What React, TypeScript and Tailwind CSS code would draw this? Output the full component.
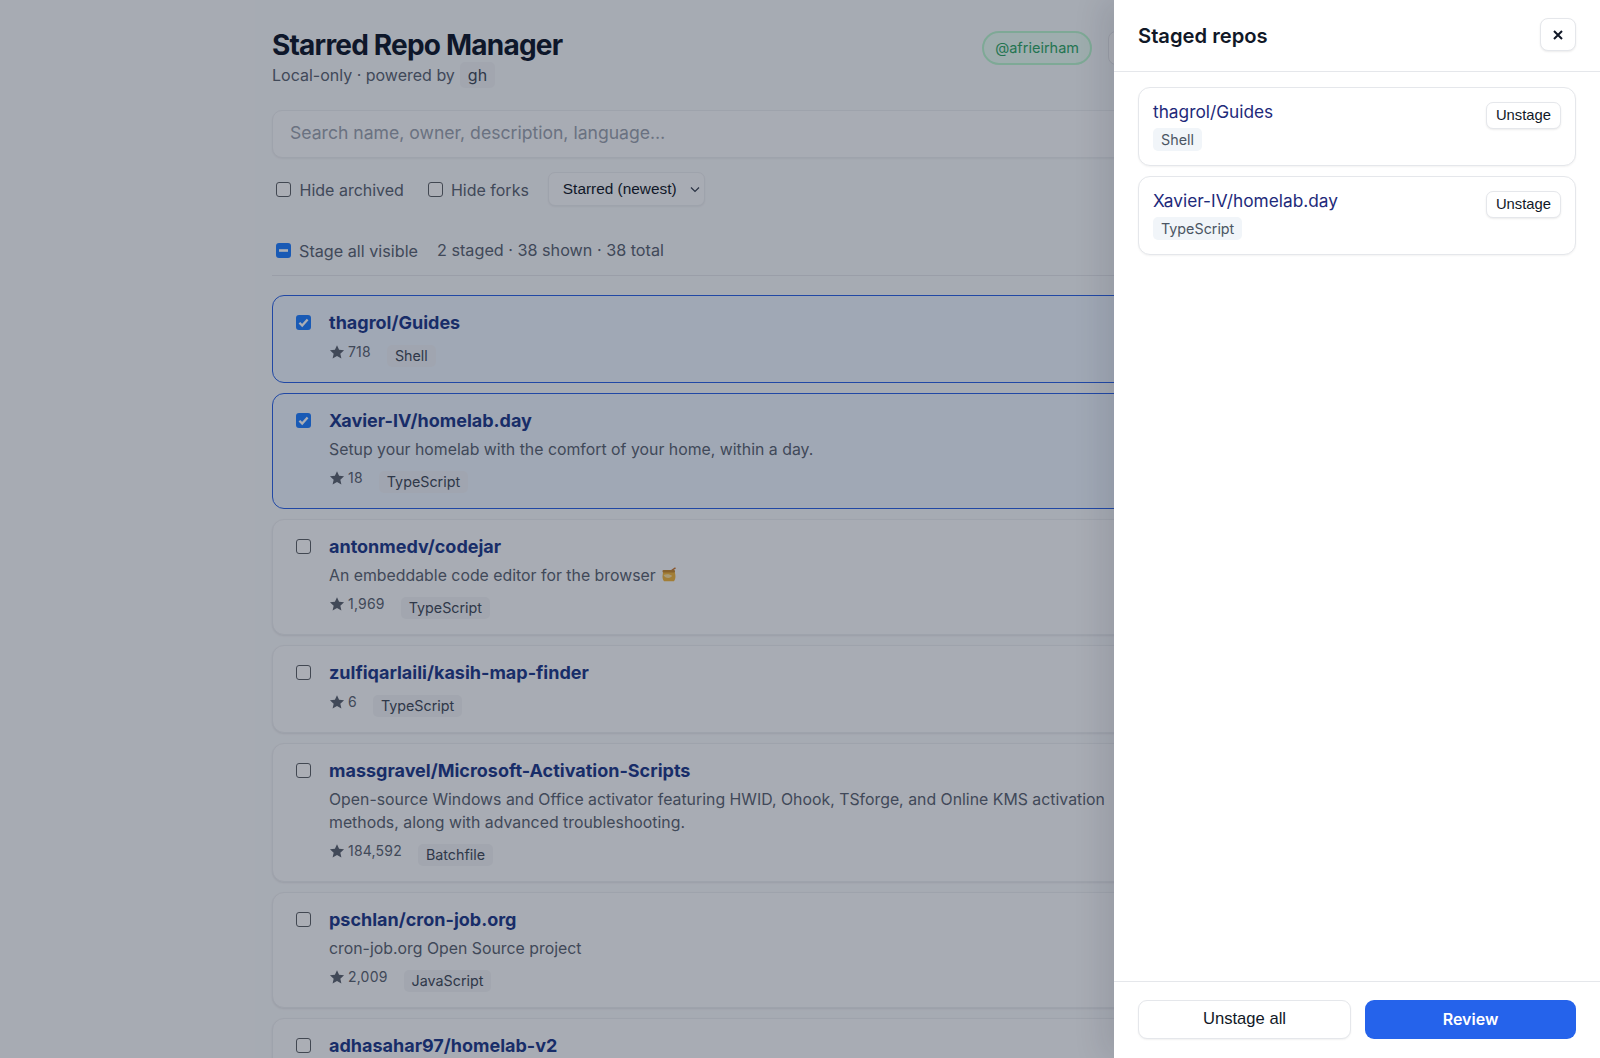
import React from "react";

function Check({ state }: { state: "on" | "off" | "mixed" }) {
  if (state === "off")
    return <span className="block w-[15px] h-[15px] shrink-0 rounded-[3px] border border-[#5f6368] bg-white" />;
  return (
    <span className="flex w-[15px] h-[15px] shrink-0 items-center justify-center rounded-[3px] bg-[#207eff]">
      <svg viewBox="0 0 15 15" className="w-[15px] h-[15px]">
        {state === "on" ? (
          <path d="M3.400 7.800l2.800 2.800 5.400-6" fill="none" stroke="white" strokeWidth="2.300" />
        ) : (
          <rect x="3" y="6.200" width="9" height="2.600" fill="white" />
        )}
      </svg>
    </span>
  );
}

function Star({ shift }: { shift: boolean }) {
  return (
    <svg viewBox="0 0 24 24" className="w-[16px] h-[16px] mr-[3px] shrink-0 fill-[#5d6470]">
      <path d="M12 1.800l3.100 6.900 7.500.8-5.600 5 1.600 7.400L12 18.100l-6.600 3.800L7 14.500l-5.600-5 7.500-.8z" />
    </svg>
  );
}

function Honey() {
  return (
    <svg viewBox="0 0 16 16" className="inline-block w-[16px] h-[16px] ml-[5px] align-[-2px]">
      <path d="M10.500 3.500L14.500 .8" stroke="#c9772c" strokeWidth="1.400" />
      <path d="M2.200 4h11.400l.6 3c.6 3 .2 5.500-1.200 7.200H3C1.500 12.500 1.200 10 1.800 7z" fill="#f2b63c" />
      <rect x="1.500" y="3" width="12.500" height="2.600" rx="1" fill="#c98a2e" />
      <path d="M2.500 8c3.500-1.500 7-.5 8.500.8-1 3-7 3-8.500-.8z" fill="#fbe0a0" />
    </svg>
  );
}

type Repo = { name: string; desc?: string[]; stars: string; lang: string; honey?: boolean; staged?: boolean };

const repos: Repo[] = [
  { name: "thagrol/Guides", stars: "718", lang: "Shell", staged: true },
  { name: "Xavier-IV/homelab.day", desc: ["Setup your homelab with the comfort of your home, within a day."], stars: "18", lang: "TypeScript", staged: true },
  { name: "antonmedv/codejar", desc: ["An embeddable code editor for the browser"], honey: true, stars: "1,969", lang: "TypeScript" },
  { name: "zulfiqarlaili/kasih-map-finder", stars: "6", lang: "TypeScript" },
  {
    name: "massgravel/Microsoft-Activation-Scripts",
    desc: [
      "Open-source Windows and Office activator featuring HWID, Ohook, TSforge, and Online KMS activation",
      "methods, along with advanced troubleshooting.",
    ],
    stars: "184,592",
    lang: "Batchfile",
  },
  { name: "pschlan/cron-job.org", desc: ["cron-job.org Open Source project"], stars: "2,009", lang: "JavaScript" },
  { name: "adhasahar97/homelab-v2", desc: ["Personal homelab configuration"], stars: "3", lang: "Shell" },
];

function RepoCard({ r }: { r: Repo }) {
  const hasDesc = !!r.desc;
  return (
    <div
      className={
        "flex rounded-[12px] border pt-[14px] pl-[23px] pr-[23px] " +
        (hasDesc ? "pb-[15px] " : "pb-[14.500px] ") +
        (r.staged
          ? "border-[#2b63e6] bg-[#eff6ff]"
          : "border-[#eceef1] bg-[#fbfcfd] shadow-[0_1px_2px_rgba(0,0,0,0.08)]")
      }
    >
      <div className="w-[33px] shrink-0 pt-[5px]">
        <Check state={r.staged ? "on" : "off"} />
      </div>
      <div className="min-w-0 flex-1">
        <div className="text-[18px] leading-[26px] font-bold text-[#1e3a8a]">{r.name}</div>
        {r.desc && (
          <div className="mt-[4px] mb-[2px] text-[15.850px] leading-[23px] text-[#5b6472]">
            {r.desc.map((d) => (
              <div key={d} className="whitespace-nowrap">
                {d}
                {r.honey && <Honey />}
              </div>
            ))}
          </div>
        )}
        <div className={"flex items-start text-[14px] leading-[16px] text-[#5b6472] " + (hasDesc ? "mt-[9px]" : "mt-[8px]")}>
          <Star shift={hasDesc} />
          <span className="tracking-[0.2px]">{r.stars}</span>
          <span
            className={
              "ml-[16px] mt-[1px] h-[22px] rounded-[5px] px-[8px] text-[14.300px] leading-[22px] text-[#414a59] " +
              (r.staged ? "bg-[#eef2f8]" : "bg-[#f1f3f6]")
            }
          >
            {r.lang}
          </span>
        </div>
      </div>
    </div>
  );
}

function StagedCard({ name, lang }: { name: string; lang: string }) {
  return (
    <div className="flex items-start justify-between rounded-[12px] border border-[#e5e7eb] bg-white pt-[11px] pb-[14px] pl-[14px] pr-[14px] shadow-[0_1px_2px_rgba(0,0,0,0.05)]">
      <div>
        <div className="text-[17.300px] leading-[26px] font-normal text-[#1e2a7a]">{name}</div>
        <span className="mt-[3px] inline-block h-[23px] rounded-[5px] bg-[#f1f5f9] px-[8px] text-[14.300px] leading-[23px] text-[#4b5563]">
          {lang}
        </span>
      </div>
      <button className="mt-[3px] h-[27px] rounded-[7px] border border-[#e5e7eb] bg-white px-[9px] font-['Liberation_Sans',sans-serif] text-[14.800px] leading-[25px] text-[#111827] shadow-[0_1px_2px_rgba(0,0,0,0.08)]">
        Unstage
      </button>
    </div>
  );
}

export default function App() {
  return (
    <div className="relative h-[1058px] w-[1600px] overflow-hidden bg-[#f8fafc] font-['Inter',sans-serif]">
      <div className="mx-auto w-[1056px] pt-[28px]">
        <div className="flex items-start justify-between">
          <div>
            <h1 className="text-[28px] leading-[34px] font-bold tracking-[-0.8px] text-[#0f172a]">Starred Repo Manager</h1>
            <div className="flex h-[26px] items-center text-[16px] text-[#5b6472]">
              Local-only · powered by
              <span className="ml-[5px] h-[26px] rounded-[5px] bg-[#f1f3f6] px-[8px] leading-[26px] text-[#414a59]">gh</span>
            </div>
          </div>
          <div className="mt-[3px] flex items-center gap-[16px]">
            <span className="h-[34px] rounded-full border-2 border-[#bbf7d0] bg-[#ecfdf5] px-[11px] text-[14.500px] leading-[30px] text-[#2fa866]">
              @afrieirham
            </span>
            <span className="block h-[34px] w-[220px] rounded-[8px] border border-[#e5e7eb] bg-white" />
          </div>
        </div>

        <div className="mt-[22px] h-[48px] rounded-[10px] border border-[#eceef1] bg-[#fbfcfd] pl-[17px] text-[17.600px] leading-[44px] text-[#9ca3af] shadow-[0_1px_2px_rgba(0,0,0,0.05)]">
          Search name, owner, description, language…
        </div>

        <div className="mt-[14px] flex h-[34px] items-center pl-[4px] text-[16px] text-[#5b6472]">
          <Check state="off" />
          <span className="ml-[8.500px] mt-[2px]">Hide archived</span>
          <span className="ml-[24px]">
            <Check state="off" />
          </span>
          <span className="ml-[8px] mt-[2px]">Hide forks</span>
          <div className="ml-[19px] flex h-[34px] w-[157px] items-center justify-between rounded-[7px] border border-[#eceef1] bg-[#fbfcfd] pl-[14px] pr-[3px] font-['Liberation_Sans',sans-serif] text-[15.400px] text-[#111827] shadow-[0_1px_2px_rgba(0,0,0,0.05)]">
            Starred (newest)
            <svg viewBox="0 0 12 12" className="h-[12px] w-[12px]">
              <path d="M2 4.500l4 4 4-4" fill="none" stroke="#374151" strokeWidth="1.200" />
            </svg>
          </div>
        </div>

        <div className="mt-[33px] flex h-[23px] items-center pl-[4px] text-[16.200px] text-[#5b6472]">
          <Check state="mixed" />
          <span className="ml-[8px] mt-[2px]">Stage all visible</span>
          <span className="ml-[19px]">2 staged · 38 shown · 38 total</span>
        </div>
        <div className="mt-[13px] h-px bg-[#e5e7eb]" />

        <div className="mt-[19px] flex flex-col gap-[10.200px]">
          {repos.map((r) => (
            <RepoCard key={r.name} r={r} />
          ))}
        </div>
      </div>

      <div className="absolute inset-0 bg-[rgba(15,23,42,0.35)]" />

      <aside className="absolute inset-y-0 right-0 flex w-[486px] flex-col bg-white shadow-[-12px_0_28px_rgba(15,23,42,0.1)]">
        <div className="flex h-[72px] items-center justify-between border-b border-[#e5e7eb] pl-[24px] pr-[24px]">
          <h2 className="mt-[2px] text-[20.200px] font-semibold text-[#111827]">Staged repos</h2>
          <button className="mb-[2px] flex h-[33px] w-[36px] items-center justify-center rounded-[8px] border border-[#e5e7eb] bg-white shadow-[0_1px_2px_rgba(0,0,0,0.08)]">
            <svg viewBox="0 0 12 12" className="h-[12px] w-[12px]">
              <path d="M2 2l8 8M10 2l-8 8" stroke="#111827" strokeWidth="2" />
            </svg>
          </button>
        </div>
        <div className="flex flex-1 flex-col gap-[10px] pl-[24px] pr-[24px] pt-[15px]">
          <StagedCard name="thagrol/Guides" lang="Shell" />
          <StagedCard name="Xavier-IV/homelab.day" lang="TypeScript" />
        </div>
        <div className="flex gap-[14px] border-t border-[#e5e7eb] pb-[19px] pl-[24px] pr-[24px] pt-[18px]">
          <button className="h-[39px] flex-1 rounded-[9px] border border-[#e5e7eb] bg-white font-['Liberation_Sans',sans-serif] text-[16.600px] text-[#111827] shadow-[0_1px_2px_rgba(0,0,0,0.06)]">
            Unstage all
          </button>
          <button className="h-[39px] flex-1 rounded-[9px] bg-[#2563eb] pb-[2px] text-[16px] font-semibold text-white">Review</button>
        </div>
      </aside>
    </div>
  );
}
